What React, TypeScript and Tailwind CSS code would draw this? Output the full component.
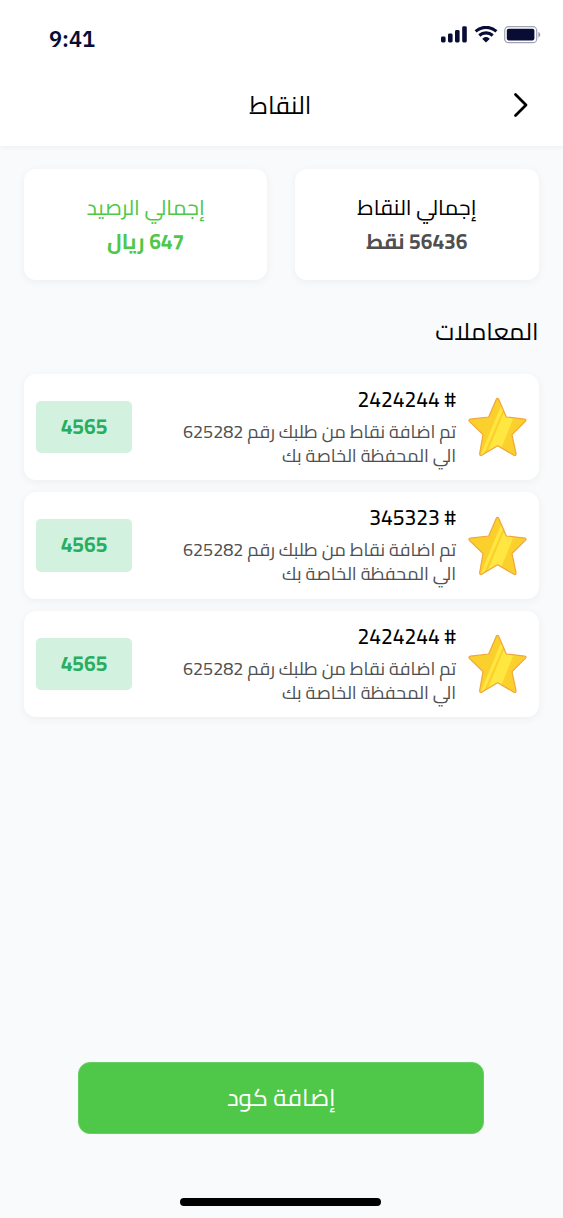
type Transaction = {
  id: string;
  order: string;
  points: string;
};

const TRANSACTIONS: Transaction[] = [
  { id: "2424244", order: "625282", points: "4565" },
  { id: "345323", order: "625282", points: "4565" },
  { id: "2424244", order: "625282", points: "4565" },
];

function SignalIcon() {
  return (
    <svg width="26" height="18" viewBox="0 0 26 18" fill="#090d35">
      <rect x="0" y="10.5" width="4.6" height="6" rx="1.4" />
      <rect x="7" y="7.5" width="4.6" height="9" rx="1.4" />
      <rect x="14" y="4" width="4.6" height="12.5" rx="1.4" />
      <rect x="21.2" y="0.3" width="4.6" height="16.2" rx="1.4" />
    </svg>
  );
}

function WifiIcon() {
  return (
    <svg width="24" height="18" viewBox="0 0 24 18" fill="none">
      <g stroke="#090d35" strokeWidth="3.1">
        <path d="M1.6 5.3a15.6 15.6 0 0 1 20.8 0" />
        <path d="M5.3 9.5a10 10 0 0 1 13.4 0" />
      </g>
      <path
        d="M12 16.5l-3.4-3.2a.6.6 0 0 1 0-.9 5.2 5.2 0 0 1 6.8 0 .6.6 0 0 1 0 .9z"
        fill="#090d35"
      />
    </svg>
  );
}

function BatteryIcon() {
  return (
    <svg width="37" height="18" viewBox="0 0 37 18" fill="none">
      <rect x="0.7" y="0.7" width="32" height="16" rx="3.8" stroke="#090d35" strokeOpacity="0.38" strokeWidth="1.2" />
      <rect x="2.8" y="2.8" width="27.6" height="11.6" rx="1.8" fill="#090d35" />
      <path d="M34.4 6v5.4c1.1-.5 1.9-1.5 1.9-2.7s-.8-2.2-1.9-2.7z" fill="#090d35" fillOpacity="0.42" />
    </svg>
  );
}

const STAR =
  "M124 42.5Q127.500 37.500 131 42.500L154 96L209 102.500Q215.500 104 211 109L171 149L183 206Q183.500 213 177 211L128 182.500L80 211Q74 213 74 206L84 149L43 109Q39.500 104 46 102.500L101 96Z";

function StarIcon({ id }: { id: string }) {
  return (
    <svg width="59" height="59" viewBox="39 36 177 177" className="shrink-0">
      <clipPath id={id}>
        <path d={STAR} />
      </clipPath>
      <path d={STAR} fill="#fbd02c" />
      <g clipPath={`url(#${id})`}>
        <path d="M139 60L76 212L85 212L148 66Z" fill="#ffe640" />
        <path d="M152 70L182 98L134 215L92 215Z" fill="#ffe640" />
        <path d="M175 100L181 100L143 195L138 193Z" fill="#fbd02c" />
      </g>
      <path d={STAR} fill="none" stroke="#f0a63a" strokeWidth="3.6" strokeLinejoin="round" />
    </svg>
  );
}

function TransactionCard({ item, index }: { item: Transaction; index: number }) {
  return (
    <li className="flex h-[106.500px] items-center rounded-[12px] bg-white px-3 shadow-[0_2px_10px_rgba(0,0,0,0.05)]">
      <StarIcon id={`star-${index}`} />
      <div className="ms-[11.500px] flex-1 self-stretch pt-3 text-right">
        <p className="text-[21px] leading-[28px] font-medium text-black">
          # {item.id}
        </p>
        <p className="mt-[6px] text-[18px] leading-[24px] whitespace-nowrap text-[#4f4f4f]">
          تم اضافة نقاط من طلبك رقم {item.order}
          <br />
          الي المحفظة الخاصة بك
        </p>
      </div>
      <div className="flex h-[52.500px] w-24 items-center justify-center rounded-[5px] bg-[#d3f1df] pb-px text-[21px] font-bold text-[#27ae60]">
        {item.points}
      </div>
    </li>
  );
}

export default function App() {
  return (
    <div
      dir="rtl"
      className="mr-auto flex h-[1218px] w-[562.500px] flex-col overflow-hidden bg-[#f9fafc] font-['Cairo','Inter','DejaVu_Sans',sans-serif] text-black"
    >
      <header className="h-[145.500px] shrink-0 bg-white shadow-[0_2px_4px_rgba(80,100,120,0.06)]">
        <div dir="ltr" className="flex h-[76px] items-start justify-between pt-[26px] pr-[21.500px] pl-[49px]">
          <span className="pt-px font-['IBM_Plex_Sans','Noto_Sans',sans-serif] text-[21.800px] leading-[25px] font-semibold text-[#090d35]">9:41</span>
          <div className="flex gap-[6.500px]">
            <SignalIcon />
            <WifiIcon />
            <BatteryIcon />
          </div>
        </div>
        <div className="grid h-[58px] grid-cols-[60px_1fr_60px] items-center">
          <svg width="18" height="28" viewBox="0 0 18 28" className="ms-[33px]" fill="none" stroke="#000" strokeWidth="2.8" strokeLinecap="round" strokeLinejoin="round">
            <path d="M3.500 3.500L14 14L3.500 24.500" />
          </svg>
          <h1 className="ps-[2px] text-center text-[24.500px] leading-[32px]">النقاط</h1>
        </div>
      </header>

      <main className="flex flex-1 flex-col px-6 pt-[23.500px]">
        <section className="flex gap-7">
          <div className="flex h-[111px] flex-1 flex-col items-center justify-center gap-[5px] rounded-[12px] bg-white pb-px shadow-[0_2px_10px_rgba(0,0,0,0.05)]">
            <p className="text-[21.400px] leading-[30px]">إجمالي النقاط</p>
            <p className="text-[21px] leading-[30px] font-bold text-[#4f4f4f]">56436 نقط</p>
          </div>
          <div className="flex h-[111px] flex-1 flex-col items-center justify-center gap-[5px] rounded-[12px] bg-white pb-px text-[#4fc748] shadow-[0_2px_10px_rgba(0,0,0,0.05)]">
            <p className="text-[21.400px] leading-[30px]">إجمالي الرصيد</p>
            <p className="text-[21px] leading-[30px] font-bold">647 ريال</p>
          </div>
        </section>

        <h2 className="mt-[33px] text-[24.300px] leading-[36px]">المعاملات</h2>

        <ul className="mt-[24.500px] flex flex-col gap-3">
          {TRANSACTIONS.map((item, i) => (
            <TransactionCard key={i} item={item} index={i} />
          ))}
        </ul>
      </main>

      <footer className="flex flex-col items-center pb-[12px]">
        <button className="h-[72px] w-[406px] rounded-[12px] border border-[#67cf61] bg-[#4fc748] pb-[2px] text-[24.300px] text-white">
          إضافة كود
        </button>
        <div className="mt-16 mr-[1px] h-2 w-[201px] rounded-full bg-black" />
      </footer>
    </div>
  );
}
